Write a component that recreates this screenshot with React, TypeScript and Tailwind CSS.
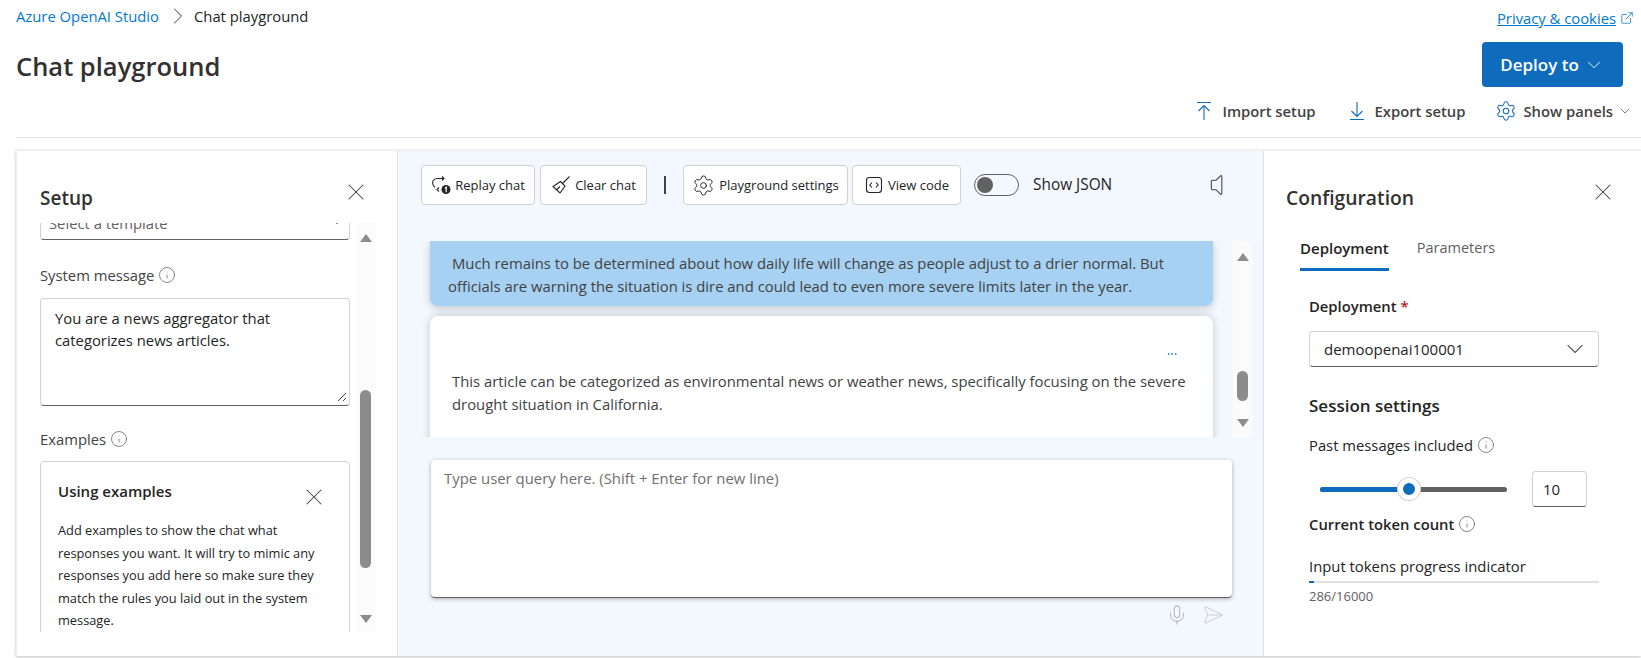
import { ChevronDown, ChevronRight, ExternalLink, Info, Mic, MoreHorizontal, SendHorizontal, Settings, Volume, X } from 'lucide-react';

function ArrowBar({ up }: { up?: boolean }) {
  return (
    <svg width="16" height="20" viewBox="0 0 16 20" fill="none" stroke="#0f6cbd" strokeWidth="1.1">
      {up ? (
        <path d="M1 1.5h14M8 19V4.5M2.5 10 8 4.5l5.5 5.5" />
      ) : (
        <path d="M1 18.5h14M8 1v14.5M2.5 10 8 15.5l5.5-5.5" />
      )}
    </svg>
  );
}

function ReplayIcon() {
  return (
    <svg width="20" height="20" viewBox="0 0 20 20" fill="none" stroke="#242424" strokeWidth="1.1">
      <path d="M11 1.5l2 2-2 2M13 3.5H6a4.5 4.5 0 0 0-3.6 7.2L4 12.5" />
      <path d="M8 12.5l-2 2 2 2" />
      <circle cx="15" cy="14.5" r="4.5" fill="#242424" stroke="none" />
      <path d="M14 13.2l1.2-1v5" stroke="#fff" strokeWidth="1.2" />
    </svg>
  );
}

function BroomIcon() {
  return (
    <svg width="20" height="20" viewBox="0 0 20 20" fill="none" stroke="#242424" strokeWidth="1.1">
      <path d="M18.5 1.5 12 8M9.5 6.5 14 11l-5 7-7-6.5zM6 14.5l3-3" />
    </svg>
  );
}

function CodeIcon() {
  return (
    <svg width="20" height="18" viewBox="0 0 20 18" fill="none" stroke="#242424" strokeWidth="1.1">
      <rect x="2.5" y="1.5" width="15" height="15" rx="3" />
      <path d="M8 6.5 5.8 9 8 11.5M12 6.5 14.2 9 12 11.5" />
    </svg>
  );
}

function TriangleUp() {
  return <div className="h-0 w-0 border-x-[6px] border-b-[8px] border-x-transparent border-b-[#8c8c8c]" />;
}

function TriangleDown() {
  return <div className="h-0 w-0 border-x-[6px] border-t-[8px] border-x-transparent border-t-[#8c8c8c]" />;
}

function InfoIcon() {
  return <Info className="h-[18px] w-[18px] text-[#616161]" strokeWidth={1} />;
}

function ToolButton({ icon, label, className }: { icon: React.ReactNode; label: string; className: string }) {
  return (
    <button className={`flex h-10 items-center gap-1 rounded border border-[#d1d1d1] bg-white text-[13px] text-[#242424] ${className}`}>
      {icon}
      <span className="pt-[2px]">{label}</span>
    </button>
  );
}

export default function App() {
  return (
    <div className="h-[658px] w-[1641px] overflow-hidden bg-white font-['Open_Sans',sans-serif] text-[#242424]">
      {/* Header */}
      <div className="flex items-start justify-between pl-4 pr-[7px]">
        <div className="flex h-8 items-center text-[14.8px] leading-5">
          <span className="text-[#0078d4]">Azure OpenAI Studio</span>
          <ChevronRight className="ml-[5px] mr-[2px] h-7 w-7 text-[#616161]" strokeWidth={0.9} />
          <span>Chat playground</span>
        </div>
        <div className="flex h-9 items-center gap-1 text-[14.8px] leading-5 text-[#0078d4]">
          <span className="underline">Privacy &amp; cookies</span>
          <ExternalLink className="h-[14px] w-[14px]" strokeWidth={1.3} />
        </div>
      </div>
      <div className="mt-[6px] flex items-center justify-between pl-4 pr-[18px]">
        <h1 className="pt-[3px] text-[25.5px] font-semibold leading-8 text-[#323130]">Chat playground</h1>
        <button className="flex h-[45px] w-[141px] items-center justify-center gap-1 rounded bg-[#0f6cbd] text-[17px] font-semibold text-white">
          Deploy to
          <ChevronDown className="h-[22px] w-[22px]" strokeWidth={1} />
        </button>
      </div>
      <div className="mt-[7px] flex h-[34px] items-center justify-end pr-[8px] text-[14.8px] font-semibold leading-5 text-[#424242]">
        <div className="flex items-center gap-[10px]">
          <ArrowBar up />
          <span>Import setup</span>
        </div>
        <div className="ml-[33px] flex items-center gap-[10px]">
          <ArrowBar />
          <span>Export setup</span>
        </div>
        <div className="ml-[30px] flex items-center gap-[6px]">
          <Settings className="h-[22px] w-[22px] text-[#0f6cbd]" strokeWidth={1.1} />
          <span>Show panels</span>
          <ChevronDown className="-ml-[2px] h-4 w-4 text-[#616161]" strokeWidth={1.2} />
        </div>
      </div>
      <div className="ml-4 mt-[9px] h-px bg-[#e0e0e0]" />

      {/* Panels */}
      <div className="ml-4 mt-[12px] flex h-[506px] border-l border-t border-[#eeeeee] shadow-[0_1px_3px_rgba(0,0,0,0.25)]">
        {/* Setup */}
        <aside className="w-[380px] shrink-0 bg-white">
          <div className="flex h-[72px] items-start justify-between pl-[23px] pr-[27px] pt-[27px]">
            <h2 className="mt-[6px] text-[19px] font-semibold leading-7 text-[#323130]">Setup</h2>
            <X className="h-7 w-7 text-[#424242]" strokeWidth={0.9} />
          </div>
          <div className="flex h-[409px]">
            <div className="ml-[23px] h-full w-[310px] overflow-hidden">
              <div className="-mt-[14px] flex h-[31px] items-center justify-between rounded border border-[#d1d1d1] border-b-[#616161] px-2 pb-[4px] text-[14.8px] leading-5 text-[#616161]">
                <span>Select a template</span>
                <ChevronDown className="h-2 w-2" strokeWidth={2} />
              </div>
              <div className="mt-[25px] flex h-5 items-center gap-[4px] text-[14.8px] leading-5 text-[#424242]">
                System message
                <InfoIcon />
              </div>
              <div className="relative mt-[13px] h-[108px] rounded border border-[#d1d1d1] border-b-[#616161] px-[14px] pt-[8px] text-[14.8px] leading-[22px]">
                You are a news aggregator that categorizes news articles.
                <svg className="absolute bottom-[3px] right-[2px]" width="10" height="10" viewBox="0 0 10 10" stroke="#444" strokeWidth="1">
                  <path d="M1 9 9 1M6 9l3-3" />
                </svg>
              </div>
              <div className="mt-[23px] flex h-5 items-center gap-[4px] text-[14.8px] leading-5 text-[#424242]">
                Examples
                <InfoIcon />
              </div>
              <div className="mt-[12px] rounded border border-[#d1d1d1] px-[17px] pb-10 pt-[17px]">
                <div className="flex justify-between pr-[4px]">
                  <h3 className="text-[15px] font-semibold leading-6">Using examples</h3>
                  <X className="mt-[4px] h-7 w-7 text-[#424242]" strokeWidth={0.9} />
                </div>
                <p className="mt-[8px] text-[12.8px] leading-[22.5px]">
                  Add examples to show the chat what responses you want. It will try to mimic any responses you add here so make sure they match the rules you laid out in the system message.
                </p>
              </div>
            </div>
            <div className="ml-[6px] flex h-full w-[19px] flex-col items-center bg-[#fbfbfb] pt-[11px]">
              <TriangleUp />
              <div className="mt-[148px] h-[178px] w-[11px] rounded-md bg-[#8c8c8c]" />
              <div className="mt-[47px]">
                <TriangleDown />
              </div>
            </div>
          </div>
        </aside>

        {/* Chat */}
        <main className="w-[867px] shrink-0 border-x border-[#e0e0e0] bg-[#f3f7fe]">
          <div className="flex h-[90px] items-start pl-[23px] pt-[14px]">
            <ToolButton icon={<ReplayIcon />} label="Replay chat" className="w-[114px] justify-center" />
            <ToolButton icon={<BroomIcon />} label="Clear chat" className="ml-[5px] w-[107px] justify-center" />
            <div className="ml-[17px] mt-[11px] h-[18px] w-[2px] bg-[#424242]" />
            <ToolButton icon={<Settings className="h-[23px] w-[23px]" strokeWidth={1} />} label="Playground settings" className="ml-[17px] w-[165px] justify-center" />
            <ToolButton icon={<CodeIcon />} label="View code" className="ml-[4px] w-[109px] justify-center" />
            <div className="ml-[13px] mt-[9px] flex h-[22px] w-[45px] items-center rounded-full border border-[#616161] pl-[2px]">
              <div className="h-4 w-4 rounded-full bg-[#616161]" />
            </div>
            <span className="ml-[14px] mt-[9px] text-[15.4px] leading-[22px]">Show JSON</span>
            <Volume className="ml-[97px] mt-[6px] h-7 w-7 text-[#424242]" strokeWidth={0.9} />
          </div>
          <div className="flex h-[196px]">
            <div className="ml-[22px] w-[813px] shrink-0 overflow-hidden pl-[10px] pr-[20px]">
              <div className="h-[65px] rounded-b-lg bg-[#a6d1f2] pl-[18px] pr-2 pt-[11px] text-[14.85px] leading-[23px] text-[#424242] shadow-[0_2px_8px_rgba(0,0,0,0.2)]">
                <p className="indent-[4px]">Much remains to be determined about how daily life will change as people adjust to a drier normal. But officials are warning the situation is dire and could lead to even more severe limits later in the year.</p>
              </div>
              <div className="mt-[10px] h-[140px] rounded-t-lg bg-white px-[22px] pt-[32px] text-[14.85px] leading-[23px] text-[#424242] shadow-[0_0_8px_rgba(0,0,0,0.2)]">
                <div className="flex justify-end pr-[11px]">
                  <MoreHorizontal className="h-3 w-4 text-[#0f6cbd]" strokeWidth={1.5} />
                </div>
                <p className="mt-[10px]">This article can be categorized as environmental news or weather news, specifically focusing on the severe drought situation in California.</p>
              </div>
            </div>
            <div className="flex h-full w-[19px] flex-col items-center bg-[#fbfbfb] pt-[12px]">
              <TriangleUp />
              <div className="mt-[110px] h-[30px] w-[11px] rounded-md bg-[#8c8c8c]" />
              <div className="mt-[18px]">
                <TriangleDown />
              </div>
            </div>
          </div>
          <div className="ml-[33px] mt-[23px] h-[138px] w-[801px] rounded border-b border-b-[#616161] bg-white px-[13px] pt-[6px] text-[14.9px] leading-6 text-[#707070] shadow-[0_1px_4px_rgba(0,0,0,0.3)]">
            Type user query here. (Shift + Enter for new line)
          </div>
          <div className="ml-[32px] mt-[6px] flex w-[802px] items-center justify-end gap-[14px] pr-[8px]">
            <Mic className="h-[22px] w-[22px] text-[#a0a0a0]" strokeWidth={0.9} />
            <SendHorizontal className="h-[22px] w-[22px] text-[#c4c4c4]" strokeWidth={0.9} />
          </div>
        </main>

        {/* Configuration */}
        <aside className="flex-1 bg-white pl-[23px]">
          <div className="flex h-[72px] items-start justify-between pr-[24px] pt-[27px]">
            <h2 className="-ml-px mt-[6px] text-[19.3px] font-semibold leading-7 text-[#323130]">Configuration</h2>
            <X className="h-7 w-7 text-[#424242]" strokeWidth={0.9} />
          </div>
          <div className="ml-[13px] mt-[15px] flex gap-[28px] text-[15px] leading-5">
            <div className="border-b-[3px] border-[#0f6cbd] pb-[10px] font-semibold">Deployment</div>
            <div className="text-[14.5px] text-[#616161]">Parameters</div>
          </div>
          <div className="ml-[22px] w-[290px]">
            <div className="mt-[25px] text-[14.8px] font-semibold leading-5">
              Deployment <span className="text-[#c50f1f]">*</span>
            </div>
            <div className="mt-[15px] flex h-9 items-center justify-between rounded border border-[#d1d1d1] border-b-[#616161] pl-[14px] pr-[9px] text-[15px]">
              demoopenai100001
              <ChevronDown className="h-7 w-7 text-[#616161]" strokeWidth={1} />
            </div>
            <h3 className="mt-[27px] text-[17px] font-semibold leading-6">Session settings</h3>
            <div className="mt-[17px] flex h-5 items-center gap-[4px] text-[14.8px] leading-5">
              Past messages included
              <InfoIcon />
            </div>
            <div className="mt-[16px] flex items-center">
              <div className="relative ml-[11px] flex h-[5px] w-[187px] rounded-full bg-[#616161]">
                <div className="h-full w-[89px] rounded-full bg-[#0f6cbd]" />
                <div className="absolute left-[78px] top-[-8.5px] h-[22px] w-[22px] rounded-full border-[5px] border-white bg-[#0f6cbd] shadow-[0_0_0_1px_#d1d1d1]" />
              </div>
              <div className="ml-[25px] flex h-9 w-[55px] items-center rounded border border-[#d1d1d1] border-b-[#616161] pl-[10px] text-[15px]">10</div>
            </div>
            <div className="mt-[7px] flex h-5 items-center gap-[4px] text-[14.8px] font-semibold leading-5">
              Current token count
              <InfoIcon />
            </div>
            <div className="mt-[22px] text-[14.85px] leading-5">Input tokens progress indicator</div>
            <div className="mt-[5px] h-[2px] bg-[#e0e0e0]">
              <div className="h-full w-[5px] bg-[#0f6cbd]" />
            </div>
            <div className="mt-[5px] text-[13px] leading-4 text-[#616161]">286/16000</div>
          </div>
        </aside>
      </div>
    </div>
  );
}
